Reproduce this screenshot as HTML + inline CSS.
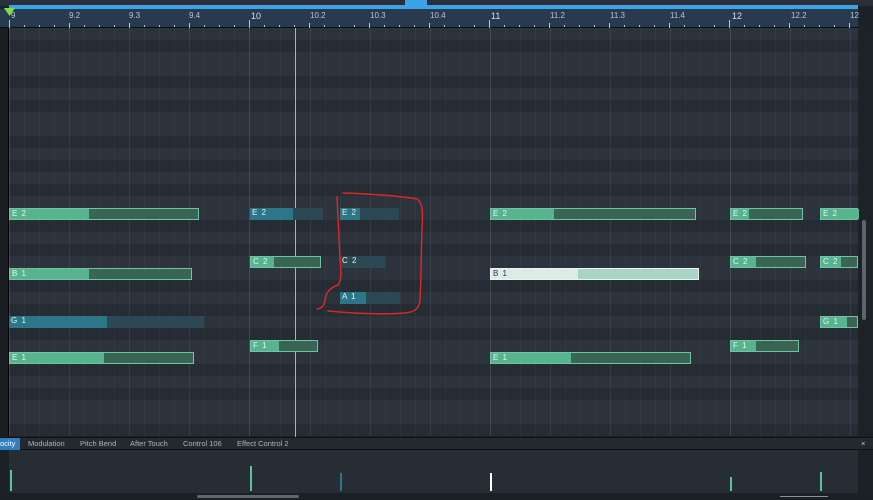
<!DOCTYPE html>
<html><head><style>
*{margin:0;padding:0;box-sizing:border-box}
body{width:873px;height:500px;overflow:hidden;background:#1c2128;font-family:"Liberation Sans",sans-serif;position:relative}
.a{position:absolute}
.top{left:0;top:0;width:873px;height:6px;background:#2a3038}
.blue{left:9px;top:5px;width:849px;height:4px;background:#3ea2e8}
.ruler{left:0;top:9px;width:858px;height:19px;background:#283a50;border-bottom:1px solid #0c0f12}
.rl{font-size:8px;color:#b7c3d0;top:11px}
.grid{left:9px;top:28px;width:849px;height:408px;
background:repeating-linear-gradient(180deg,#2c333c 0 12px,#252c33 12px 24px,#2c333c 24px 36px,#252c33 36px 48px,#2c333c 48px 72px,#252c33 72px 84px,#2c333c 84px 96px,#252c33 96px 108px,#2c333c 108px 120px,#252c33 120px 132px,#2c333c 132px 144px);
background-position:0 36px}
.vl{top:28px;height:408px;width:1px;background:rgba(255,255,255,0.035)}
.bl{top:28px;height:408px;width:1px;background:rgba(255,255,255,0.13)}
.n{height:12px;border:1px solid #6fc4a2;background:#3a6454;font-size:8px;color:#e8f4ee;line-height:10px;padding-left:2px;letter-spacing:1px}
.n i{position:absolute;left:0;top:0;bottom:0;background:#58b38f;z-index:0}
.n span{position:relative;z-index:1}
.t{border:none;background:#2c4854}
.t i{background:#2b7688}
.tabs{left:0;top:437px;width:873px;height:13px;background:#23292f;border-top:1px solid #111;border-bottom:1px solid #111}
.tb{font-size:7.5px;color:#aab4be;top:439px}
.vel{left:9px;top:450px;width:849px;height:43px;background:#262d34}
.vb{width:2px;background:#5cc39c}
</style></head><body>
<div class="a top"></div>
<div class="a" style="left:405px;top:0;width:22px;height:5px;background:#3ea2e8"></div>
<div class="a blue"></div>
<div class="a ruler"></div>
<div class="a" style="left:0;top:28px;width:9px;height:408px;background:#1a1e23;border-right:1px solid #000"></div>
<div class="a" style="left:858px;top:28px;width:15px;height:408px;background:#1d2227"></div>
<div class="a" style="left:862px;top:220px;width:4px;height:100px;background:#5a6570;border-radius:2px"></div>
<svg class="a" style="left:4px;top:8px" width="12" height="10"><polygon points="0,0 11,0 5.5,8" fill="#7ee03c"/></svg>
<div class="a rl" style="left:11px">9</div>
<div class="a rl" style="left:69px">9.2</div>
<div class="a rl" style="left:129px">9.3</div>
<div class="a rl" style="left:189px">9.4</div>
<div class="a rl" style="left:251px;font-size:9px;color:#dde">10</div>
<div class="a rl" style="left:310px">10.2</div>
<div class="a rl" style="left:370px">10.3</div>
<div class="a rl" style="left:430px">10.4</div>
<div class="a rl" style="left:491px;font-size:9px;color:#dde">11</div>
<div class="a rl" style="left:550px">11.2</div>
<div class="a rl" style="left:610px">11.3</div>
<div class="a rl" style="left:670px">11.4</div>
<div class="a rl" style="left:732px;font-size:9px;color:#dde">12</div>
<div class="a rl" style="left:791px">12.2</div>
<div class="a rl" style="left:850px">12</div>
<div class="a grid"></div>
<div id="lines"></div>
<div class="a" style="left:295px;top:28px;width:1px;height:465px;background:#aab2ba"></div>

<div class="a n" style="left:9px;top:208px;width:190px"><i style="width:79px"></i><span>E 2</span></div>
<div class="a n" style="left:9px;top:268px;width:183px"><i style="width:79px"></i><span>B 1</span></div>
<div class="a n t" style="left:9px;top:316px;width:195px"><i style="width:98px"></i><span>G 1</span></div>
<div class="a n" style="left:9px;top:352px;width:185px"><i style="width:94px"></i><span>E 1</span></div>
<div class="a n t" style="left:250px;top:208px;width:73px"><i style="width:43px"></i><span>E 2</span></div>
<div class="a n" style="left:250px;top:256px;width:71px"><i style="width:23px"></i><span>C 2</span></div>
<div class="a n" style="left:250px;top:340px;width:68px"><i style="width:28px"></i><span>F 1</span></div>
<div class="a n t" style="left:340px;top:208px;width:59px"><i style="width:20px"></i><span>E 2</span></div>
<div class="a n t" style="left:340px;top:256px;width:45px"><span>C 2</span></div>
<div class="a n t" style="left:340px;top:292px;width:60px"><i style="width:26px"></i><span>A 1</span></div>
<div class="a n" style="left:490px;top:208px;width:206px"><i style="width:63px"></i><span>E 2</span></div>
<div class="a n" style="left:490px;top:268px;width:209px;background:#a7d4c4;border-color:#e8f4f0;color:#334"><i style="width:87px;background:#dcebe6"></i><span>B 1</span></div>
<div class="a n" style="left:490px;top:352px;width:201px"><i style="width:80px"></i><span>E 1</span></div>
<div class="a n" style="left:730px;top:208px;width:73px"><i style="width:18px"></i><span>E 2</span></div>
<div class="a n" style="left:730px;top:256px;width:76px"><i style="width:25px"></i><span>C 2</span></div>
<div class="a n" style="left:730px;top:340px;width:69px"><i style="width:25px"></i><span>F 1</span></div>
<div class="a n" style="left:820px;top:208px;width:38px"><i style="width:38px"></i><span>E 2</span></div>
<div class="a n" style="left:820px;top:256px;width:38px"><i style="width:20px"></i><span>C 2</span></div>
<div class="a n" style="left:820px;top:316px;width:38px"><i style="width:26px"></i><span>G 1</span></div>

<svg class="a" style="left:0;top:0" width="873" height="500">
<path d="M343,193 C370,194 400,196 417,199 C423,203 423,212 422,230 C421,255 421,285 420,300 C419,308 416,312 405,313 C380,315 350,313 328,311 M337,197 C338,215 339,240 340,258 C341,270 342,280 338,285 C330,288 326,292 325,300 C324,306 322,308 317,309" fill="none" stroke="#d42a2a" stroke-width="1.5" stroke-linecap="round"/>
</svg>

<div class="a tabs"></div>
<div class="a" style="left:0;top:438px;width:20px;height:12px;background:#2f7fc0"></div>
<div class="a tb" style="left:0;color:#fff">ocity</div>
<div class="a tb" style="left:28px">Modulation</div>
<div class="a tb" style="left:80px">Pitch Bend</div>
<div class="a tb" style="left:130px">After Touch</div>
<div class="a tb" style="left:183px">Control 106</div>
<div class="a tb" style="left:237px">Effect Control 2</div>
<div class="a tb" style="left:861px;color:#ccc">×</div>
<div class="a vel"></div>
<div class="a vb" style="left:10px;top:470px;height:21px"></div>
<div class="a vb" style="left:250px;top:466px;height:25px"></div>
<div class="a vb" style="left:340px;top:473px;height:18px;background:#2b7688"></div>
<div class="a vb" style="left:490px;top:473px;height:18px;background:#fff"></div>
<div class="a vb" style="left:730px;top:477px;height:14px"></div>
<div class="a vb" style="left:820px;top:472px;height:19px"></div>
<div class="a" style="left:0;top:493px;width:873px;height:7px;background:#1b2025"></div>
<div class="a" style="left:197px;top:495px;width:102px;height:3px;background:#5f666e;border-radius:2px"></div>
<div class="a" style="left:780px;top:496px;width:48px;height:1px;background:#8a929a"></div>
<script>
var h='';
for(var x=9;x<858;x+=15){var bar=((x-9)%240<1)||x==250||x==490||x==730;var beat=((x-9)%60==0);
h+='<div class="a '+(bar||beat?'bl':'vl')+'" style="left:'+(x>=250?x+1:x)+'px'+(beat&&!bar?';background:rgba(255,255,255,0.07)':'')+'"></div>';
h+='<div class="a" style="left:'+x+'px;top:'+(bar?20:(beat?23:25))+'px;width:1px;height:'+(bar?8:(beat?5:2))+'px;background:#b7c3d0"></div>';}
document.getElementById('lines').innerHTML=h;
</script>
</body></html>
